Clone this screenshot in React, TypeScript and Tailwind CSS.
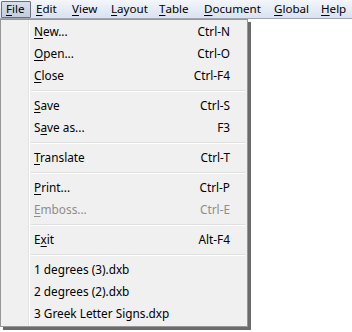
import React from 'react';

type Item = { label: string; u: number; shortcut?: string; disabled?: boolean } | 'sep';

const items: Item[] = [
    { label: 'New...', u: 0, shortcut: 'Ctrl-N' },
    { label: 'Open...', u: 0, shortcut: 'Ctrl-O' },
    { label: 'Close', u: 0, shortcut: 'Ctrl-F4' },
    'sep',
    { label: 'Save', u: 0, shortcut: 'Ctrl-S' },
    { label: 'Save as...', u: 1, shortcut: 'F3' },
    'sep',
    { label: 'Translate', u: 0, shortcut: 'Ctrl-T' },
    'sep',
    { label: 'Print...', u: 0, shortcut: 'Ctrl-P' },
    { label: 'Emboss...', u: 0, shortcut: 'Ctrl-E', disabled: true },
    'sep',
    { label: 'Exit', u: 1, shortcut: 'Alt-F4' },
    'sep',
    { label: '1 degrees (3).dxb', u: -1 },
    { label: '2 degrees (2).dxb', u: -1 },
    { label: '3 Greek Letter Signs.dxp', u: -1 },
];

const menus = [
    { label: 'File', w: 'w-[30px]' },
    { label: 'Edit', w: 'w-[36px]' },
    { label: 'View', w: 'w-[39px]' },
    { label: 'Layout', w: 'w-[48px]' },
    { label: 'Table', w: 'w-[45px]' },
    { label: 'Document', w: 'w-[70px]' },
    { label: 'Global', w: 'w-[47px]' },
    { label: 'Help', w: 'w-[35px]' },
];

const Mnemonic: React.FC<{ text: string; u: number }> = ({ text, u }) => {
    if (u < 0) return <>{text}</>;
    return (
        <>
            {text.slice(0, u)}
            <span className="underline underline-offset-2">{text[u]}</span>
            {text.slice(u + 1)}
        </>
    );
};

const App: React.FC = () => {
    return (
        <div className="w-[352px] h-[332px] bg-white overflow-hidden text-black" style={{ fontFamily: '"Segoe UI", "Noto Sans", sans-serif' }}>
            {/* Menu bar */}
            <div className="h-[19px] flex items-center pl-[1px] text-[11.6px] bg-gradient-to-b from-[#f3f6fb] to-[#d9e2f0] border-b border-[#a0a7b3] whitespace-nowrap">
                {menus.map((m, i) => (
                    <div
                        key={m.label}
                        className={
                            i === 0
                                ? `${m.w} h-[17px] pl-[4px] flex items-center border border-[#6a717c] bg-gradient-to-b from-[#d8dfea] to-[#c3cddd] rounded-[1px]`
                                : `${m.w} h-[17px] pl-[5px] flex items-center`
                        }
                    >
                        <Mnemonic text={m.label} u={0} />
                    </div>
                ))}
            </div>

            {/* Dropdown */}
            <div className="relative w-[248px] bg-[#f0f0f0] border border-[#979797] py-[1px] text-[11.8px] shadow-[3px_3px_0_0_#6b6b6b]">
                <div className="absolute top-0 bottom-0 left-[27px] w-[1px] bg-[#e2e3e3]" />
                <div className="absolute top-0 bottom-0 left-[28px] w-[1px] bg-white" />
                {items.map((it, idx) =>
                    it === 'sep' ? (
                        <div key={idx} className="h-[8px] flex flex-col justify-center pl-[30px] pr-[2px]">
                            <div className="h-[1px] bg-[#e0e0e0]" />
                            <div className="h-[1px] bg-white" />
                        </div>
                    ) : (
                        <div
                            key={idx}
                            className={`h-[22px] flex items-center justify-between pl-[33px] pr-[17px] ${it.disabled ? 'text-[#8d8d8d]' : ''}`}
                        >
                            <span>
                                <Mnemonic text={it.label} u={it.u} />
                            </span>
                            {it.shortcut && <span>{it.shortcut}</span>}
                        </div>
                    )
                )}
            </div>
        </div>
    );
};

export default App;
